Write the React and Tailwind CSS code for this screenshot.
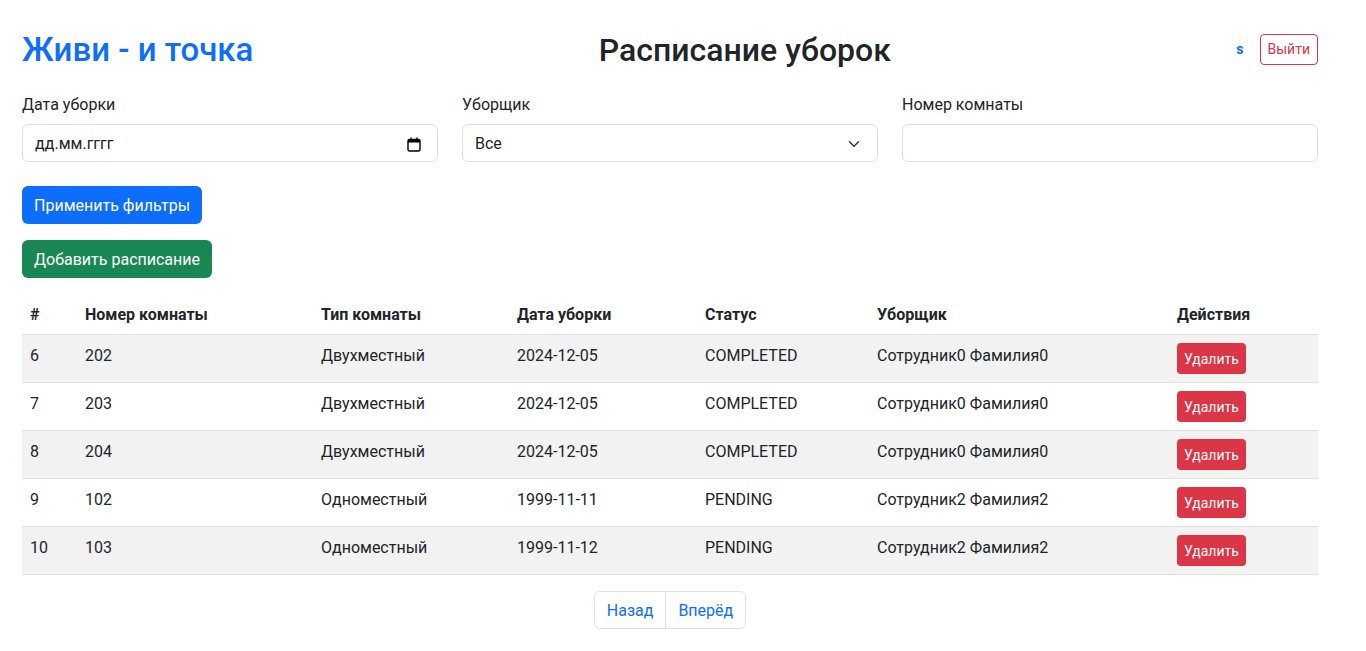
import React from 'react';

const rows = [
  { id: 6, room: '202', type: 'Двухместный', date: '2024-12-05', status: 'COMPLETED', cleaner: 'Сотрудник0 Фамилия0' },
  { id: 7, room: '203', type: 'Двухместный', date: '2024-12-05', status: 'COMPLETED', cleaner: 'Сотрудник0 Фамилия0' },
  { id: 8, room: '204', type: 'Двухместный', date: '2024-12-05', status: 'COMPLETED', cleaner: 'Сотрудник0 Фамилия0' },
  { id: 9, room: '102', type: 'Одноместный', date: '1999-11-11', status: 'PENDING', cleaner: 'Сотрудник2 Фамилия2' },
  { id: 10, room: '103', type: 'Одноместный', date: '1999-11-12', status: 'PENDING', cleaner: 'Сотрудник2 Фамилия2' },
];

const CalendarIcon = () => (
  <svg width="14" height="15" viewBox="0 0 14 15" fill="none">
    <rect x="1" y="2.5" width="12" height="11.5" rx="1.5" stroke="#000" strokeWidth="1.4" />
    <rect x="1" y="2.5" width="12" height="3" fill="#000" />
    <rect x="3.3" y="0.5" width="1.4" height="3" fill="#000" />
    <rect x="9.3" y="0.5" width="1.4" height="3" fill="#000" />
  </svg>
);

export default function App() {
  return (
    <div className="min-h-screen bg-white text-[#212529] font-['Segoe_UI','Roboto','Liberation_Sans',sans-serif] text-base leading-6">
      <div className="w-[1296px] ml-[22px] pt-[24px]">
        {/* Header */}
        <div className="flex items-center justify-between h-[52px] mb-4">
          <h1 className="text-[33px] font-medium leading-[1.2] text-[#0d6efd]">Живи - и точка</h1>
          <h2 className="text-[32px] font-medium leading-[1.2]">Расписание уборок</h2>
          <div className="flex items-center gap-4 -mt-[2px]">
            <span className="text-sm font-bold text-[#0d6efd]">s</span>
            <button className="border border-[#dc3545] text-[#dc3545] rounded-[4px] px-[7px] py-1 text-sm leading-[21px]">Выйти</button>
          </div>
        </div>

        {/* Filters */}
        <div className="grid grid-cols-3 gap-6">
          <div>
            <div className="pt-[1px] mb-[7px]">Дата уборки</div>
            <div className="h-[38px] border border-[#dee2e6] rounded-[6px] flex items-center justify-between pl-3 pr-4 pt-[2px]">
              <span>дд.мм.гггг</span>
              <CalendarIcon />
            </div>
          </div>
          <div>
            <div className="pt-[1px] mb-[7px]">Уборщик</div>
            <div className="h-[38px] border border-[#dee2e6] rounded-[6px] flex items-center justify-between pl-3 pr-[15px] pt-[2px]">
              <span>Все</span>
              <svg width="16" height="12" viewBox="0 0 16 16" fill="none">
                <path d="m2 5 6 6 6-6" stroke="#343a40" strokeWidth="2" strokeLinecap="round" strokeLinejoin="round" />
              </svg>
            </div>
          </div>
          <div>
            <div className="pt-[1px] mb-[7px]">Номер комнаты</div>
            <div className="h-[38px] border border-[#dee2e6] rounded-[6px]"></div>
          </div>
        </div>

        <div className="mt-6 flex flex-col items-start gap-4">
          <button className="h-[38px] px-3 pt-[2px] rounded-[6px] bg-[#0d6efd] text-white">Применить фильтры</button>
          <button className="h-[38px] px-3 pt-[2px] rounded-[6px] bg-[#198754] text-white">Добавить расписание</button>
        </div>

        {/* Table */}
        <table className="w-full mt-4 border-collapse text-left">
          <thead>
            <tr className="border-b border-[#dee2e6]">
              <th className="w-[55px] px-2 pt-[9px] pb-[7px] font-bold">#</th>
              <th className="w-[236px] px-2 pt-[9px] pb-[7px] font-bold">Номер комнаты</th>
              <th className="w-[196px] px-2 pt-[9px] pb-[7px] font-bold">Тип комнаты</th>
              <th className="w-[188px] px-2 pt-[9px] pb-[7px] font-bold">Дата уборки</th>
              <th className="w-[172px] px-2 pt-[9px] pb-[7px] font-bold">Статус</th>
              <th className="w-[300px] px-2 pt-[9px] pb-[7px] font-bold">Уборщик</th>
              <th className="px-2 pt-[9px] pb-[7px] font-bold">Действия</th>
            </tr>
          </thead>
          <tbody>
            {rows.map((r, i) => (
              <tr key={r.id} className={`border-b border-[#dee2e6] ${i % 2 === 0 ? 'bg-[#f2f2f2]' : 'bg-white'}`}>
                <td className="px-2 pt-[9px] pb-[7px] align-top">{r.id}</td>
                <td className="px-2 pt-[9px] pb-[7px] align-top">{r.room}</td>
                <td className="px-2 pt-[9px] pb-[7px] align-top">{r.type}</td>
                <td className="px-2 pt-[9px] pb-[7px] align-top">{r.date}</td>
                <td className="px-2 pt-[9px] pb-[7px] align-top">{r.status}</td>
                <td className="px-2 pt-[9px] pb-[7px] align-top">{r.cleaner}</td>
                <td className="px-2 pt-2 pb-2 align-top">
                  <button className="h-[31px] px-[7px] pt-[1px] rounded-[4px] bg-[#dc3545] text-white text-sm leading-[21px]">Удалить</button>
                </td>
              </tr>
            ))}
          </tbody>
        </table>

        {/* Pagination */}
        <div className="flex justify-center mt-4">
          <div className="flex border border-[#dee2e6] rounded-[6px] text-[#0d6efd]">
            <span className="h-[36px] px-3 pt-[2px] flex items-center">Назад</span>
            <span className="h-[36px] px-3 pt-[2px] flex items-center border-l border-[#dee2e6]">Вперёд</span>
          </div>
        </div>
      </div>
    </div>
  );
}
